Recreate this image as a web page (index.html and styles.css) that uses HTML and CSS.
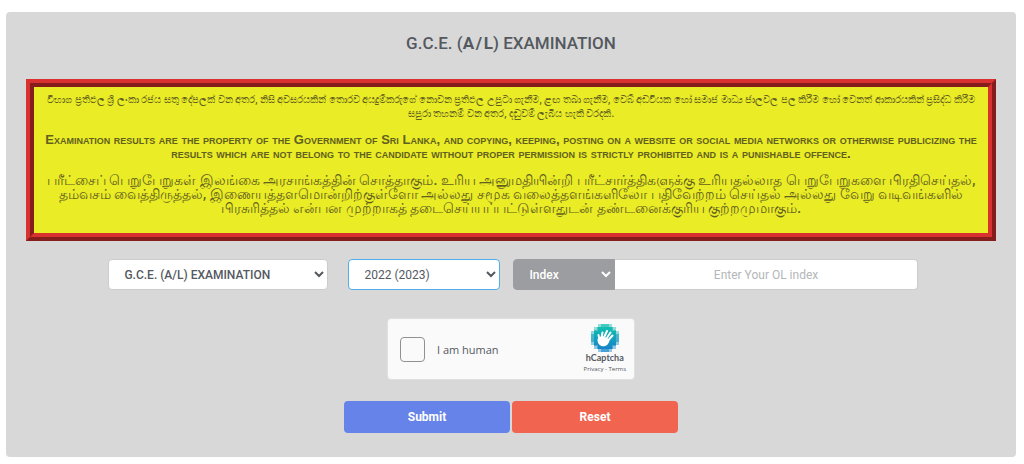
FILE: index.html
```html
<!DOCTYPE html>
<html lang="en">
<head>
    <meta charset="UTF-8">
    <meta name="viewport" content="width=device-width, initial-scale=1.0">
    <title>G.C.E. (A/L) Examination</title>
    <link rel="stylesheet" href="styles.css">
</head>
<body>
    <main class="card">
        <h1>G.C.E. (<b>A&#8202;/&#8202;L</b>) EXAMINATION</h1>

        <!-- Notice in three languages -->
        <div class="notice">
            <p class="sinhala" lang="si">විභාග ප්‍රතිඵල ශ්‍රී ලංකා රජය සතු දේපලක් වන අතර, නිසි අවසරයකින් තොරව අයදුම්කරුගේ නොවන ප්‍රතිඵල උපුටා ගැනීම, ළඟ තබා ගැනීම, වෙබ් අඩවියක හෝ සමාජ මාධ්‍ය ජාලවල පල කිරීම හෝ වෙනත් ආකාරයකින් ප්‍රසිද්ධ කිරීම<br>සපුරා තහනම් වන අතර, දඬුවම් ලැබිය හැකි වරදකි.</p>
            <p class="english">Examination results are the property of the Government of Sri Lanka, and copying, keeping, posting on a website or social media networks or otherwise publicizing the<br>results which are not belong to the candidate without proper permission is strictly prohibited and is a punishable offence.</p>
            <p class="tamil" lang="ta">பரீட்சைப் பெறுபேறுகள் இலங்கை அரசாங்கத்தின் சொத்தாகும். உரிய அனுமதியின்றி பரீட்சார்த்திகளுக்கு உரியதல்லாத பெறுபேறுகளை பிரதிசெய்தல்,<br>தம்வசம் வைத்திருத்தல், இணையத்தளமொன்றிற்குள்ளோ அல்லது சமூக வலைத்தளங்களிலோ பதிவேற்றம் செய்தல் அல்லது வேறு வடிவங்களில்<br>பிரசுரித்தல் என்பன முற்றாகத் தடைசெய்யப்பட்டுள்ளதுடன் தண்டனைக்குரிய குற்றமுமாகும்.</p>
        </div>

        <form>
            <div class="fields">
                <select class="field exam" aria-label="Examination">
                    <option>G.C.E. (A/L) EXAMINATION</option>
                </select>
                <select class="field year" aria-label="Year">
                    <option>2022 (2023)</option>
                </select>
                <div class="index-group">
                    <select class="field type" aria-label="Search type">
                        <option>Index</option>
                    </select>
                    <input class="field number" type="text" aria-label="Index number" placeholder="Enter Your OL index">
                </div>
            </div>

            <div class="captcha">
                <input type="checkbox" id="human">
                <label for="human">I am human</label>
                <div class="brand">
                    <svg class="logo" viewBox="0 0 28 28" aria-hidden="true">
                        <defs>
                            <linearGradient id="teal" x1="0" y1="0" x2="0" y2="1">
                                <stop offset="0" stop-color="#12bfae"/>
                                <stop offset="1" stop-color="#1683c9"/>
                            </linearGradient>
                        </defs>
                        <g fill="url(#teal)">
                            <path opacity=".45" d="M7 0h14v3h4v4h3v14h-3v4h-4v3H7v-3H3v-4H0V7h3V3h4z"/>
                            <path opacity=".6" d="M10 0h8v3h4v3h3v4h3v8h-3v4h-3v3h-4v3h-8v-3H6v-3H3v-4H0v-8h3V6h3V3h4z"/>
                            <path d="M7 3h14v4h4v14h-4v4H7v-4H3V7h4z"/>
                        </g>
                        <g fill="none" stroke="#fff" stroke-width="2" stroke-linecap="round">
                            <path d="M8.500 16L7.500 11M10.500 14l1-5.500M13 13.500l3-6.500M15.500 14.500l4-6M17 16.500l4.500-5"/>
                        </g>
                        <path fill="#fff" d="M7.500 14c1-1 3-2 5-1.500l4 2 2 2c-1 5-5 6.500-8 5.500-3-1-4-4-4-6 0-1 .5-1.500 1-2z"/>
                    </svg>
                    <strong>hCaptcha</strong>
                    <span class="links"><a href="#">Privacy</a> - <a href="#">Terms</a></span>
                </div>
            </div>

            <div class="buttons">
                <button type="submit" class="submit">Submit</button>
                <button type="reset" class="reset">Reset</button>
            </div>
        </form>
    </main>
</body>
</html>
```
FILE: styles.css
```css
* {
    box-sizing: border-box;
}

body {
    margin: 12px 8px 7px 6px;
    background: white;
    color: #54595f;
    font-family: Roboto, sans-serif;
    font-size: 12px;
}

.card {
    padding: 20px;
    padding-bottom: 24px;
    background: #d8d8d8;
    border-radius: 4px;
}

h1 {
    margin: 0 0 25px;
    font-size: 17px;
    line-height: 22px;
    font-weight: 500;
    text-align: center;
}

.notice {
    padding: 6px 0 18px;
    border: 8px ridge #d93030;
    background: #eaec26;
    color: #62601f;
    text-align: center;
}

.notice p {
    margin: 0 0 12px;
    line-height: 14px;
}

.notice .sinhala {
    font-size: 10px;
    font-weight: 500;
}

.notice .english {
    font-family: "Liberation Sans", Arial, sans-serif;
    font-size: 13px;
    font-weight: bold;
    font-variant: small-caps;
}

.notice .tamil {
    margin-bottom: 0;
    font-size: 14px;
    font-weight: 500;
}

.fields {
    display: grid;
    grid-template-columns: 240fr 165fr 405fr;
    margin: 18px 8% 28px 8.5%;
}

.field {
    height: 31px;
    padding: 0 11px;
    border: 1px solid #ccc;
    border-radius: 4px;
    background: white;
    color: #54595f;
    font-family: inherit;
    font-size: 12px;
    font-weight: 500;
}

.exam {
    width: calc(100% - 20px);
}

.year {
    width: calc(100% - 13px);
    border-color: #52aeea;
    font-weight: 400;
}

.index-group {
    display: flex;
}

.type {
    width: 25%;
    border-color: #9b9da0;
    border-radius: 4px 0 0 4px;
    background: #9b9da0;
    color: white;
}

.number {
    flex: 1;
    min-width: 0;
    border-left: 0;
    border-radius: 0 4px 4px 0;
    font-weight: 400;
    text-align: center;
}

.number::placeholder {
    color: #b4b6b9;
}

.captcha {
    display: flex;
    align-items: center;
    width: 248px;
    height: 62px;
    margin: 0 auto 21px;
    padding: 0 8px 0 12px;
    border: 1px solid #e0e0e0;
    border-radius: 4px;
    background: #fafafa;
}

.captcha input {
    appearance: none;
    width: 25px;
    height: 25px;
    margin: 0 12px 0 0;
    border: 1px solid #919191;
    border-radius: 4px;
    background: #fafafa;
}

.captcha label {
    flex: 1;
    font-family: "Open Sans", sans-serif;
    font-size: 11px;
}

.brand {
    display: flex;
    flex-direction: column;
    align-items: center;
}

.logo {
    width: 28px;
    height: 28px;
}

.brand strong {
    font-family: Lato, sans-serif;
    font-size: 9px;
    line-height: 12px;
}

.links {
    font-family: "Open Sans", sans-serif;
    font-size: 6px;
    line-height: 10px;
}

.links a {
    color: inherit;
    text-decoration: none;
}

.buttons {
    display: flex;
    justify-content: center;
    gap: 2px;
}

button {
    width: 166px;
    height: 32px;
    border: 0;
    border-radius: 4px;
    color: white;
    font-family: inherit;
    font-size: 12px;
    font-weight: bold;
    cursor: pointer;
}

.submit {
    background: #6583e8;
}

.reset {
    background: #f06450;
}
```
